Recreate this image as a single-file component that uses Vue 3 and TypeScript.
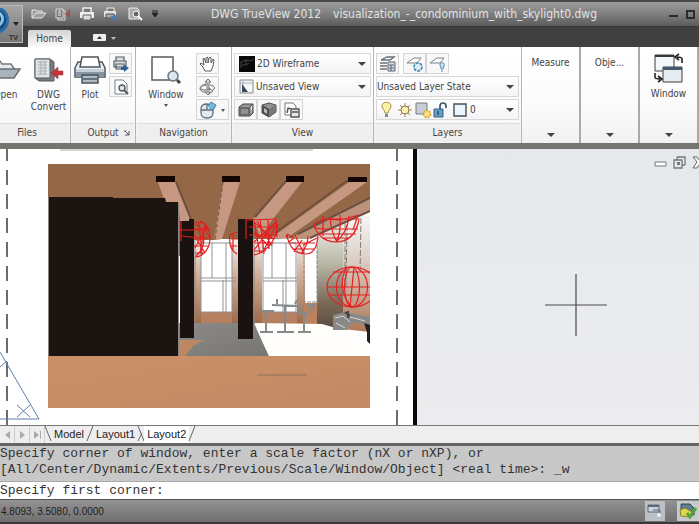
<script setup lang="ts">
import { ref } from 'vue'

interface Globe { cx: number; cy: number; rx: number; ry: number }

const visualStyle = ref('2D Wireframe')
const savedView = ref('Unsaved View')
const layerState = ref('Unsaved Layer State')
const layer = ref('0')
const command = ref('Specify first corner:')
const layouts = ['Model', 'Layout1', 'Layout2']
const activeLayout = ref('Layout2')
const history = [
  'Specify corner of window, enter a scale factor (nX or nXP), or',
  '[All/Center/Dynamic/Extents/Previous/Scale/Window/Object] <real time>: _w',
]
const globes: Globe[] = [
  { cx: 352, cy: 287, rx: 25, ry: 20 },
]
</script>

<template>
  <div class="app">
    <header class="titlebar">
      <button class="appmenu" aria-label="Application menu">
        <svg width="23" height="33" viewBox="0 0 23 33">
          <circle cx="-5" cy="12" r="14" fill="#2b6ea6" />
          <circle cx="-5" cy="12" r="11" fill="#164a7c" />
          <circle cx="-4" cy="11" r="8" fill="#8cc6ea" />
          <circle cx="-5" cy="11" r="6" fill="#12324f" />
          <path d="M13 14h6l-3 4z" fill="#222" />
          <text x="9" y="32" font-size="7" font-weight="bold" fill="#3c3c3c">TV</text>
        </svg>
      </button>
      <nav class="quick" aria-label="Quick access">
        <button aria-label="Open"><svg width="16" height="14" viewBox="0 0 16 14"><path d="M1 11V3h4l1 1h5v2M1 11l4-5h10l-4 5z" fill="#9b9d9e" stroke="#e4e4e4" /></svg></button>
        <button aria-label="DWG Convert"><svg width="16" height="14" viewBox="0 0 16 14"><path d="M1 2h7v9H1zM8 3l2 1v9H3v-2" fill="#777" stroke="#ddd" /><path d="M3 4h3M3 6h3M3 8h3" stroke="#eee" /><path d="M15 2v9l-5-4z" fill="#a74d4d" /></svg></button>
        <button aria-label="Plot"><svg width="16" height="14" viewBox="0 0 16 14"><path d="M4 5V1h8v4" fill="#777" stroke="#eee" stroke-width="1.500" /><path d="M1 5h14v6H1z" fill="#eee" /><path d="M4 8h8v5H4z" fill="#ddd" stroke="#666" /></svg></button>
        <button aria-label="Batch Plot"><svg width="16" height="14" viewBox="0 0 16 14"><path d="M4 4V1h7v3" fill="#777" stroke="#eee" /><path d="M1 4h12v6H1z" fill="#e2e2e2" /><path d="M3 7h8v4H3z" fill="#aaa" stroke="#555" /><path d="M8 9h3V7l4 3-4 4v-2H8z" fill="#4c7faf" /></svg></button>
        <button aria-label="Preview"><svg width="16" height="14" viewBox="0 0 16 14"><path d="M2 1h8l2 2v9H2z" fill="#aaa" stroke="#eee" /><circle cx="9" cy="7" r="3" fill="#666" stroke="#fff" /><path d="M11 9l4 4" stroke="#fff" stroke-width="2" /></svg></button>
        <button aria-label="Customize"><svg width="8" height="8" viewBox="0 0 8 8"><path d="M1 1h6M1 3h6L4 7z" stroke="#222" fill="#222" /></svg></button>
      </nav>
      <h1 class="title"><span>DWG TrueView 2012</span><span>visualization_-_condominium_with_skylight0.dwg</span></h1>
      <div class="winctl">
        <button aria-label="Minimize"><svg width="11" height="10" viewBox="0 0 11 10"><path d="M1 7h9" stroke="#2c2c2c" stroke-width="2" /></svg></button>
        <button aria-label="Maximize"><svg width="9" height="10" viewBox="0 0 9 10"><path d="M1 2h7v7H1z" fill="none" stroke="#2c2c2c" stroke-width="2" /></svg></button>
      </div>
    </header>
    <nav class="tabstrip" aria-label="Ribbon tabs">
      <button class="tab">Home</button>
      <button class="collapse" aria-label="Minimize ribbon"><svg width="24" height="8" viewBox="0 0 24 8"><rect width="13" height="7" rx="1" fill="#eee" /><path d="M4 5h5L6.500 2z" fill="#333" /><path d="M18 3h5l-2.500 3z" fill="#bbb" /></svg></button>
    </nav>

    <section class="ribbon">
      <div class="panel files">
        <div class="body">
          <button class="big"><svg width="32" height="30" viewBox="0 0 32 30"><path d="M2 23V6h8l2 3h9l4 6" fill="#e7eaed" stroke="#74797e" stroke-width="1.500" /><path d="M2 23l8-9h20l-6 9z" fill="#aab3bb" stroke="#666e76" stroke-width="1.500" /></svg><span>Open</span></button>
          <button class="big"><svg width="32" height="30" viewBox="0 0 32 30"><path d="M2 4h15l4 3v19H6l-4-3z" fill="#777c81" stroke="#565b60" /><path d="M2 4h15v19H2z" fill="#dfe3e6" stroke="#565b60" /><path d="M5 7h9M5 10h9M5 13h9M5 16h9M5 19h9M8 6v14M12 6v14" stroke="#a9aeb2" /><path d="M30 16h-5v-4l-7 6 7 6v-4h5z" fill="#c5343b" stroke="#93383d" stroke-width=".5" /></svg><span>DWG<br>Convert</span></button>
        </div>
        <footer>Files</footer>
      </div>
      <div class="panel output">
        <div class="body">
          <button class="big"><svg width="32" height="30" viewBox="0 0 32 30"><path d="M1 13l3-6h24l3 6v9H1z" fill="#eef2f4" stroke="#4e545a" stroke-width="1.500" /><path d="M6 12L8 2h16l2 10z" fill="#fff" stroke="#4e545a" stroke-width="1.500" /><path d="M2 14h28v8H2z" fill="#8696a5" /><path d="M2 14h28v3H2z" fill="#c6d0d8" /><path d="M8 20h16v8H8z" fill="#aebbc6" stroke="#4e545a" stroke-width="1.500" /><path d="M9 24h14" stroke="#617281" stroke-width="2" /></svg><span>Plot</span></button>
          <div class="stack">
            <button class="small" aria-label="Batch Plot"><svg width="18" height="18" viewBox="0 0 18 18"><path d="M4 6V2h8v4M2 6h12v6H2zM4 9h8v5H4z" fill="#dce0e3" stroke="#555d64" stroke-width="1.200" /><path d="M9 12h3v-2l5 3-5 4v-2H9z" fill="#2b6394" /></svg></button>
            <button class="small" aria-label="Preview"><svg width="18" height="18" viewBox="0 0 18 18"><path d="M3 2h8l4 4v10H3z" fill="#fff" stroke="#777f86" /><circle cx="10" cy="10" r="3" fill="#dfe6ea" stroke="#535b62" stroke-width="1.400" /><path d="M12 12l4 4" stroke="#535b62" stroke-width="2" /></svg></button>
          </div>
        </div>
        <footer>Output<button class="launch" aria-label="Plot options"><svg width="6" height="6" viewBox="0 0 6 6"><path d="M0 1h2M1 1l4 4M5 1v4H1" stroke="#555" fill="none" /></svg></button></footer>
      </div>
      <div class="panel navigation">
        <div class="body">
          <button class="big"><svg width="32" height="30" viewBox="0 0 32 30"><path d="M2 2h21v23H2z" fill="#fff" stroke="#555b61" stroke-width="1.500" /><circle cx="23" cy="21" r="5" fill="#dce8ef" stroke="#69747d" stroke-width="1.500" /><path d="M27 25l3 3" stroke="#434a50" stroke-width="3" /></svg><span>Window</span><svg width="6" height="8" viewBox="0 0 6 8"><path d="M1 3h4L3 6z" fill="#555" /></svg></button>
          <div class="stack">
            <button class="small" aria-label="Pan"><svg width="18" height="18" viewBox="0 0 18 18"><path d="M6 16l-2-4-3-3 1-1 3 2-1-6 1-1 2 5V3l1-1 1 1v5l1-5 1-1 1 1v5l2-4 1 1-1 6-2 5z" fill="#fff" stroke="#555c63" /></svg></button>
            <button class="small" aria-label="Orbit"><svg width="18" height="18" viewBox="0 0 18 18"><path d="M9 1l3 3h-2v10h2l-3 3-3-3h2V4H6z" fill="#dce1e5" stroke="#6a7178" /><path d="M7 7C0 8 0 12 6 12h5l-1-2 4 3-4 3 1-2H5C-1 13 0 7 7 6zM11 7c6 1 5 4 3 5" fill="#e7eaec" stroke="#6a7178" /></svg></button>
            <button class="small wide" aria-label="Wheel"><svg width="28" height="18" viewBox="0 0 28 18"><path d="M2 8c0-4 3-5 6-5s6 2 6 5v4c0 4-2 5-6 5s-6-2-6-5zM2 9h12M8 3v6" fill="#e4ebef" stroke="#65717b" stroke-width="1.300" /><path d="M9 5l3-4 5 3-2 4-4 1" fill="#74b9db" stroke="#3f84ab" /><path d="M22 8h4l-2 3z" fill="#555" /></svg></button>
          </div>
        </div>
        <footer>Navigation</footer>
      </div>
      <div class="panel view">
        <div class="body rows">
          <label class="combo"><svg width="16" height="16" viewBox="0 0 16 16"><path d="M0 0h16v16H0z" fill="#090909" /><path d="M2 12V6l5-2 4 1 4-2M7 4v4M3 9h4l3-2" stroke="#444" fill="none" /></svg>
            <select v-model="visualStyle" aria-label="Visual style"><option>2D Wireframe</option></select><i class="caret"></i></label>
          <label class="combo"><svg width="15" height="15" viewBox="0 0 15 15"><path d="M1 1h13v13H1z" fill="#f5f7f8" stroke="#858c92" /><path d="M4 1v13M1 4h13" stroke="#aab0b5" /><path d="M3 5l6 8H3z" fill="#34485a" /></svg>
            <select v-model="savedView" aria-label="Saved view"><option>Unsaved View</option></select><i class="caret"></i></label>
          <div class="strip">
            <button class="small" aria-label="Top view"><svg width="18" height="16" viewBox="0 0 18 16"><path d="M2 5l4-3h10l-3 3v9H2zM13 14l3-3V2" fill="#999" stroke="#454545" /><path d="M2 5h11v9H2z" fill="#686868" /><path d="M4 7h7v5H4z" fill="#909090" /></svg></button>
            <button class="small" aria-label="Isometric view"><svg width="18" height="16" viewBox="0 0 18 16"><path d="M2 3l7-2 7 2v7l-7 5-7-4z" fill="#929292" stroke="#4b4b4b" /><path d="M2 3l7 4v8l-7-4z" fill="#4e4e4e" /><path d="M9 7l7-4v7l-7 5z" fill="#777" /><path d="M4 6l3 2v4l-3-2z" fill="#bbb" /></svg></button>
            <button class="small" aria-label="View manager"><svg width="18" height="16" viewBox="0 0 18 16"><path d="M2 1h8l3 3v9H2z" fill="#fff" stroke="#777" /><path d="M4 11l1-5 4 1M8 7h8v8H8z" fill="#e5e7e9" stroke="#555" stroke-width="1.400" /><path d="M9 10h6" stroke="#777" stroke-width="2" /></svg></button>
          </div>
        </div>
        <footer>View</footer>
      </div>
      <div class="panel layers">
        <div class="body rows">
          <div class="strip split">
            <button class="small" aria-label="Layer properties"><svg width="18" height="18" viewBox="0 0 18 18"><path d="M2 5l6-3h7l-4 3zM1 8h7M1 11h7M1 14h7" fill="#fff" stroke="#67717a" stroke-width="1.300" /><path d="M9 7h7v9H9zM10 10h5M10 13h5M12 10v6" fill="#d7dee4" stroke="#58636d" /></svg></button>
            <button class="small" aria-label="Freeze layer"><svg width="18" height="18" viewBox="0 0 18 18"><path d="M1 8l7-5h7l-4 5z" fill="#fff" stroke="#7a848c" /><circle cx="12" cy="12" r="4" fill="#d9eef8" stroke="#3c86b3" stroke-width="1.600" stroke-dasharray="3 1" /></svg></button>
            <button class="small" aria-label="Layer off"><svg width="18" height="18" viewBox="0 0 18 18"><path d="M1 8l7-5h7l-4 5z" fill="#fff" stroke="#7a848c" /><path d="M12 14v-2c-4-5 5-6 3-1l-1 3zM12 16h2" fill="#c7e2f1" stroke="#5d8eac" /></svg></button>
          </div>
          <label class="combo plain"><select v-model="layerState" aria-label="Layer state"><option>Unsaved Layer State</option></select><i class="caret"></i></label>
          <label class="combo layer"><svg width="90" height="18" viewBox="0 0 90 18">
            <path d="M7 12c0-3-3-4-3-7 0-5 9-5 9 0 0 3-3 4-3 7z" fill="#fff3a5" stroke="#a18c4a" /><path d="M7 13h3v3H7z" fill="#888" />
            <path d="M27 2v14M20 9h14M22 4l10 10M32 4L22 14" stroke="#9c8a5c" /><circle cx="27" cy="9" r="4" fill="#fff2b5" stroke="#8b7744" />
            <path d="M38 2h11v11H38z" fill="#c9cdd5" stroke="#777b83" /><circle cx="49" cy="13" r="3.500" fill="#ffe080" stroke="#d39c2c" stroke-width="1.500" stroke-dasharray="2 1" />
            <path d="M56 8h9v8h-9z" fill="#639fc3" stroke="#2e6386" /><path d="M62 8V5c0-4 6-4 6 0v2M60 10v4" fill="none" stroke="#38586c" stroke-width="1.700" />
            <path d="M76 3h12v12H76z" fill="#edf5fd" stroke="#444f5b" stroke-width="1.400" /></svg>
            <select v-model="layer" aria-label="Layer"><option>0</option></select><i class="caret"></i></label>
        </div>
        <footer>Layers</footer>
      </div>
      <button class="panel folded"><span>Measure</span><i class="caret"></i></button>
      <button class="panel folded"><span>Obje...</span><i class="caret"></i></button>
      <button class="panel folded window"><svg width="32" height="30" viewBox="0 0 32 30"><path d="M2 2h19v16H2z" fill="#f3f5f8" stroke="#3b4047" /><path d="M2 2h19v2H2z" fill="#32373e" /><path d="M10 14h19v15H10z" fill="#e6eaf1" stroke="#3b4047" /><path d="M10 14h19v3H10z" fill="#46566b" /><path d="M29 10V6q0-2-5-2M26 1l-4 3 4 3M2 20v4q0 2 5 2M5 23l4 3-4 3" fill="none" stroke="#222" stroke-width="1.600" /></svg><span>Window</span><i class="caret"></i></button>
    </section>

    <main class="workspace">
      <svg class="paper" width="417" viewBox="0 149 417 276" preserveAspectRatio="xMinYMin slice" role="img" aria-label="Condominium viewport">
        <defs>
          <linearGradient id="floor" x2="1" y2="1"><stop stop-color="#cb9069" /><stop offset="1" stop-color="#c18a64" /></linearGradient>
          <linearGradient id="slab" x2="1" y2="1"><stop stop-color="#8c8a86" /><stop offset="1" stop-color="#777672" /></linearGradient>
          <linearGradient id="jamb" x2="0" y2="1"><stop stop-color="#f4eeeb" /><stop offset=".5" stop-color="#c9a48d" /><stop offset="1" stop-color="#9c6b4c" /></linearGradient>
          <linearGradient id="side" x2="0" y2="1"><stop stop-color="#f4f3ee" /><stop offset=".4" stop-color="#b9b9a8" /><stop offset=".75" stop-color="#7b6a58" /><stop offset="1" stop-color="#5b4b3f" /></linearGradient>
          <linearGradient id="right" x2="0" y2="1"><stop stop-color="#fff" /><stop offset=".4" stop-color="#ded1ca" /><stop offset="1" stop-color="#b07857" /></linearGradient>
          <clipPath id="view"><path d="M48 164h322v244H48z" /></clipPath>
        </defs>
        <path d="M0 149h417v276H0z" fill="#fff" />
        <path d="M7 149v276M397 149v276" stroke="#6c6c6c" stroke-width="2" stroke-dasharray="15 9" stroke-dashoffset="3" />
        <path d="M60 150h253" stroke="#aaa" />
        <g clip-path="url(#view)">
          <path d="M48 164h322v92H48z" fill="#946847" />
          <path d="M194 240h20l8-1h50l25-1 73-34v152H194z" fill="#fff" />
          <path d="M180 312h150v16H180z" fill="#b5805f" />
          <path d="M194 240h7v83h-7zM253 240h9v83h-9zM297 240h8v83h-8zM232 240h6v83h-6z" fill="url(#jamb)" />
          <path d="M304 303h19v22h-19z" fill="#bb825e" />
          <path d="M317 233l28-15v112h-28z" fill="url(#side)" />
          <path d="M343 221l27-15v126l-27-3z" fill="url(#right)" />
          <path d="M345 222v60M347 225l-1 62M361 218l-1 56" stroke="#7d8076" stroke-dasharray="6 2" />
          <path d="M317 245v60M304 245v57h13" stroke="#898989" stroke-dasharray="4 1" fill="none" />
          <g fill="none" stroke="#8f9499">
            <path d="M201 243h31v69h-31zM212 243v35M226 243v69M223 280v32M201 278h35M201 281h35" />
            <path d="M263 243h33v69h-33zM272 243v35M286 243v69M283 280v32M263 278h34M263 281h34" />
          </g>
          <path d="M158 182h18l15 39h-11l-2-19h-13zM223 182h17l-18 57h-8zM286 182h16l-33 42-8 15-8-20zM349 182h18l-80 56h-16z" fill="#c69882" />
          <path d="M176 182l15 37M286 181l-31 36M348 180l-73 53" fill="none" stroke="#6d503f" stroke-width="2" />
          <path d="M223 182l-8 57" stroke="#6d503f" stroke-dasharray="4 2" />
          <path d="M370 198v14l-61 27h-20z" fill="#bd927b" />
          <path d="M370 198l-72 36M370 211l-60 27" stroke="#675047" stroke-width="2" />
          <path d="M156 176h19v6h-19zM222 176h18v6h-18zM286 176h18v6h-18zM348 177h19v5h-19z" fill="#140604" />
          <path d="M179 323h75l15 33h-90z" fill="url(#slab)" />
          <path d="M179 340h25l-11 6-8 10h-6z" fill="#bc8763" />
          <path d="M254 323l68 1 28 8 20 24H269z" fill="#fffefb" />
          <path d="M180 221h9v-2h5v119h-14zM238 219h15v120h-15z" fill="#1a1210" />
          <path d="M49 197h64v1h52l1 4h12v154H49z" fill="#1c1411" />
          <path d="M48.500 197v159M178.500 203v153M195 240v83M254 219v120" stroke="#8a8580" />
          <g fill="none" stroke="#858a8f" stroke-width="2">
            <path d="M272 305l27 1M285 306v26M277 332h17M262 311h12M266 312v20M260 332h13M304 306l-5 7M298 313h10M304 313v18M298 332h13M309 312l5-7h-7M277 304v-5M295 304l2-4" />
          </g>
          <path d="M333 315l12-3 25 5v8l-18-2-5 7h-14z" fill="#888987" />
          <path d="M335 318l8-2 7 6M350 317l15 4M336 323l9 5" fill="none" stroke="#d7d7d7" />
          <path d="M364 323l6 2v19l-3-3v-9z" fill="#231d1b" />
          <path d="M348 318v-7M345 312l5 4" stroke="#444" stroke-width="2" />
          <g fill="none" stroke="#e51e20" stroke-width="1.200">
            <path d="M180 230h25l5 8M181 221v20M182 236l18 2M194 222l10 1 4 8M194 229h14M194 238h15M194 246h14M195 253h9M195 257c8 0 15-8 15-19 0-10-4-15-10-17M195 224c10 3 13 22 1 32M194 235l11 18M195 248l12-22M199 223l3 31M205 226l-5 27" />
            <path d="M237 254c-7-4-8-12-7-19l7-3M231 239h7M230 246h7M233 233v18M246 219v20M247 220l30-1M249 227h29M249 235h28M254 243h20M254 251h12M254 221l6 33M260 219l4 35M268 219l1 30M276 219l1 18M254 255c14-3 23-17 24-31M254 250l23-29M254 242l22-20M257 221l15 25M263 252l14-29M254 232l15 14M254 222l20 18" />
            <path d="M287 234c1 12 8 20 19 20 7 0 11-7 12-18M290 243h25M294 249h20M287 234l7 4M295 235l9 19M302 240l-8 12M308 236c0 8-3 13-7 18M317 238l-14 7M286 235l3 7 5-4" />
            <path d="M314 224c2 10 10 18 22 18 13 0 20-8 23-22M314 224l9-5 17 1 19-5M314 228l9 1h35M317 234h39M322 238h28M323 216v20M330 217c1 13 4 20 7 25M340 215c1 11 0 20-4 27M349 216c-1 11-5 19-12 25M358 215l-5 15M360 219h-38" />
          </g>
          <g v-for="(g, n) in globes" :key="n" fill="none" stroke="#e52022" stroke-width="1.200">
            <ellipse v-for="k in [1, 0.62, 0.3]" :key="k" :cx="g.cx" :cy="g.cy" :rx="g.rx * k" :ry="g.ry" />
            <path d="M327 287h43M333 272h37M330 295h40M354 267l-4 40M347 267c-10 16-2 34 5 40" />
          </g>
          <path d="M48 356h322v52H48z" fill="url(#floor)" />
          <path d="M257 375h50" stroke="#8e705c" />
        </g>
        <path d="M0 352l39 67H0M0 367l7-6M17 405l13 12M30 405l-13 12" fill="none" stroke="#5d7db0" />
      </svg>
      <div class="model">
        <div class="docctl">
          <button aria-label="Minimize drawing"><svg width="13" height="13" viewBox="0 0 13 13"><path d="M1 6h11v4H1z" fill="#fff" stroke="#777" /></svg></button>
          <button aria-label="Restore drawing"><svg width="13" height="13" viewBox="0 0 13 13"><path d="M4 1h8v8M1 4h8v8H1zM4 1v3M9 9h3" fill="none" stroke="#777" stroke-width="1.300" /><path d="M4 6h3v3H4z" fill="#777" /></svg></button>
          <button aria-label="Close drawing"><svg width="13" height="13" viewBox="0 0 13 13"><path d="M1 1h4l2 3 2-3h4L9 6l4 6H9L7 9l-2 3H1l4-6z" fill="#fff" stroke="#666" /></svg></button>
        </div>
        <svg class="cross" width="62" height="62" viewBox="0 0 62 62"><path d="M0 31h62M31 0v62" stroke="#4b4b4b" stroke-width="1.200" /></svg>
      </div>
    </main>

    <nav class="layouts" aria-label="Layouts">
      <button class="step" aria-label="Previous layout"><svg width="7" height="8" viewBox="0 0 7 8"><path d="M6 0v8L1 4z" fill="#aaa" /></svg></button>
      <button class="step" aria-label="Next layout"><svg width="7" height="8" viewBox="0 0 7 8"><path d="M1 0v8l5-4z" fill="#aaa" /></svg></button>
      <button class="step" aria-label="Last layout"><svg width="9" height="8" viewBox="0 0 9 8"><path d="M1 0v8l5-4zM7 0h1v8H7z" fill="#aaa" /></svg></button>
      <svg class="slash" width="8" height="16" viewBox="0 0 8 16"><path d="M1 0l6 15" stroke="#666" /></svg>
      <template v-for="(name, n) in layouts" :key="name">
        <button class="sheet" :class="{ active: name === activeLayout }" @click="activeLayout = name">{{ name }}</button>
        <svg class="slash" width="8" height="16" viewBox="0 0 8 16"><path :d="n === 1 ? 'M1 0l6 15M5 7l-4 8' : 'M7 0L1 15'" stroke="#666" fill="none" /></svg>
      </template>
    </nav>
    <section class="history"><p v-for="line in history" :key="line">{{ line }}</p></section>
    <input v-model="command" class="command" aria-label="Command line">
    <footer class="status">
      <span>4.8093, 3.5080, 0.0000</span>
      <button aria-label="Model or layout"><svg width="20" height="20" viewBox="0 0 20 20"><path d="M3 4h11v7H3z" fill="#cbd2da" stroke="#5b6a7b" /><path d="M3 4h11v2H3z" fill="#5b6a7b" /><path d="M8 9h7v5" fill="none" stroke="#5b6a7b" /><circle cx="14" cy="14" r="2" fill="#eef" /></svg></button>
      <button class="notify" aria-label="Notifications"><svg width="22" height="20" viewBox="0 0 22 20"><path d="M4 3h9l4 4v7H4z" fill="#617c8b" stroke="#33485a" /><path d="M3 9l5-2 7 4-3 5-8-1z" fill="#dfd84b" stroke="#85842c" /><path d="M10 12l3 4 6-9" fill="none" stroke="#54a23c" stroke-width="3" /></svg></button>
    </footer>
  </div>
</template>

<style>
body { margin: 0; }
</style>

<style scoped>
.app { display: flex; flex-direction: column; min-height: 100vh; overflow: hidden; font-family: "DejaVu Sans Condensed", "DejaVu Sans", sans-serif; font-size: 10px; color: #444; }
button { font: inherit; color: inherit; border: 0; padding: 0; margin: 0; background: none; display: flex; align-items: center; justify-content: center; }
svg { display: block; flex: none; }
.titlebar { display: flex; height: 27px; box-sizing: border-box; border-top: 2px solid #494949; border-bottom: 1px solid #383838; background: linear-gradient(#9b9b9b, #858585 40%, #5c5c5c); align-items: center; position: relative; }
.appmenu { position: absolute; left: 0; top: 3px; width: 23px; height: 38px; border: 1px solid #bbb; border-left: 0; box-sizing: border-box; background: linear-gradient(#a5a5a5, #777); z-index: 1; overflow: hidden; }
.quick { display: flex; gap: 8px; margin-left: 31px; align-items: center; }
.title { display: flex; gap: 12px; margin: 0 auto 0 52px; font-size: 12px; line-height: 16px; font-weight: normal; color: #e2e2e2; white-space: nowrap; }
.winctl { display: flex; gap: 7px; padding-right: 4px; }
.tabstrip { display: flex; height: 20px; background: #404040; padding-left: 28px; align-items: flex-end; }
.tab { width: 43px; height: 17px; background: linear-gradient(#d5d5d5, #fafafa); border-radius: 2px 2px 0 0; }
.collapse { margin: 0 0 5px 22px; }
.ribbon { display: flex; height: 96px; background: #fff; border-bottom: 6px solid #747471; overflow: hidden; }
.panel { display: flex; flex-direction: column; box-sizing: border-box; border-right: 1px solid #b5b5b5; background: linear-gradient(#fff, #fbfbfb 60%, #f1f1f1); flex: none; }
.body { display: flex; flex: 1; padding-top: 6px; align-items: flex-start; }
.panel > footer { display: flex; height: 17px; margin: 0 1px 2px; align-items: center; justify-content: center; background: #efefef; border-top: 1px solid #ddd; position: relative; }
.files { width: 87px; margin-left: -16px; }
.files .big { width: 43px; }
.output { width: 65px; }
.navigation { width: 96px; }
.view { width: 142px; }
.layers { width: 148px; }
.big { flex-direction: column; line-height: 12px; padding-top: 2px; }
.big > svg + span { margin-top: 4px; }
.output .big { width: 38px; }
.navigation .big { width: 60px; }
.stack { display: flex; flex-direction: column; gap: 2px; align-items: flex-start; }
.small { box-sizing: border-box; width: 23px; height: 22px; border: 1px solid #d5d5d5; background: #f8f8f8; }
.stack .small { height: 21px; }
.wide { width: 33px; }
.launch { position: absolute; right: 4px; top: 6px; }
.rows { flex-direction: column; gap: 2px; padding-left: 2px; padding-right: 2px; align-items: stretch; }
.strip { display: flex; }
.strip .small { height: 21px; }
.split .small:first-child { margin-right: 4px; }
.combo { display: flex; align-items: center; box-sizing: border-box; height: 21px; border: 1px solid #d8d8d8; background: linear-gradient(#fff, #f4f4f4); padding: 0 4px; gap: 2px; }
.combo.plain { padding-left: 0; }
.combo.layer { padding-left: 1px; }
select { appearance: none; flex: 1; min-width: 0; border: 0; padding: 0; background: none; font: inherit; font-size: 10px; color: #444; outline: 0; }
.caret { width: 0; border: 4px solid transparent; border-top-color: #444; border-bottom: 0; flex: none; pointer-events: none; }
.folded { width: 59px; align-items: center; justify-content: flex-start; padding: 10px 0 6px; border-right-width: 2px; border-right-style: solid; border-right-color: #aaa; }
.folded .caret { margin-top: auto; }
.folded.window { padding-top: 6px; }
.folded.window > span { margin-top: 5px; }
.workspace { display: flex; flex: 1; min-height: 276px; }
.paper { height: auto; min-height: 276px; font-family: inherit; }
.model { flex: 1; min-width: 0; position: relative; overflow: hidden; border-left: 4px solid #080808; background: linear-gradient(#e5e9ec, #ececef); margin-left: -4px; }
.docctl { display: flex; justify-content: flex-end; gap: 6px; padding-top: 7px; margin-right: -6px; }
.cross { position: absolute; left: 128px; top: 125px; }
.layouts { display: flex; box-sizing: border-box; height: 21px; background: #eee; border-top: 1px solid #777; border-bottom: 3px solid #666; align-items: stretch; font-family: "Liberation Sans", sans-serif; font-size: 11px; color: #222; }
.step { width: 15px; border-right: 1px solid #ccc; }
.slash { margin: 0 -1px; }
.sheet { padding: 0 3px 2px; }
.sheet.active { background: #fff; }
.history { background: #c8c8c8; border-bottom: 1px solid #aaa; height: 35px; overflow: hidden; }
.history p, .command { margin: 0; font: 13px/16px "Liberation Mono", monospace; color: #333; white-space: pre; }
.command { border: 0; padding: 0; height: 17px; outline: 0; background: #fff; width: 100%; }
.status { display: flex; box-sizing: border-box; height: 26px; border-top: 1px solid #555; border-bottom: 3px solid #3b3739; background: linear-gradient(#929292, #707070); color: #1d1d1d; align-items: center; font-family: "Liberation Sans", sans-serif; font-size: 10px; }
.status span { flex: 1; padding-left: 1px; }
.status button { width: 20px; background: #bbc0c5; }
.status .notify { width: 22px; margin-left: 12px; background: #c5cbca; }
</style>
